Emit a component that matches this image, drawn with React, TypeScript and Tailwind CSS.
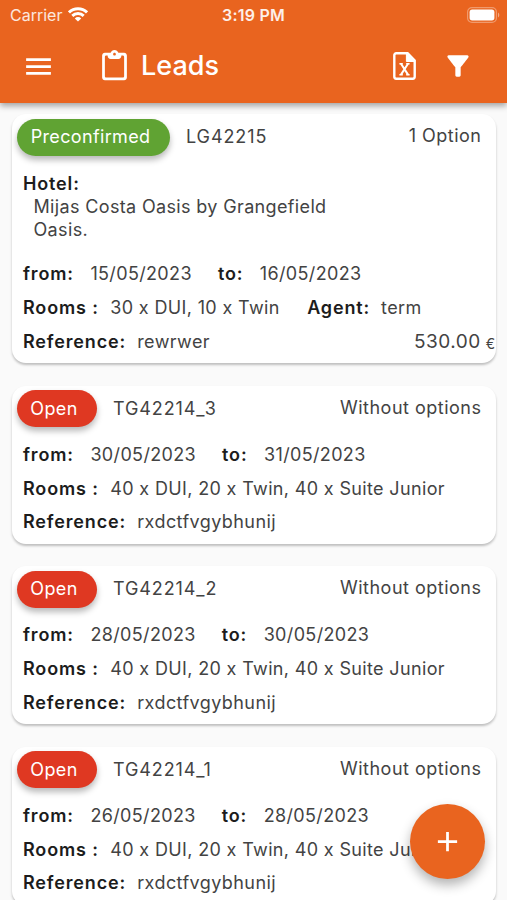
import { MdAdd, MdFilterAlt, MdMenu } from 'react-icons/md';

// --- Types ---
interface Lead {
  id: string;
  status: 'Preconfirmed' | 'Open';
  options: string;
  hotel?: string;
  from: string;
  to: string;
  rooms: string;
  agent?: string;
  reference: string;
  price?: string;
}

const leads: Lead[] = [
  {
    id: 'LG42215',
    status: 'Preconfirmed',
    options: '1 Option',
    hotel: 'Mijas Costa Oasis by Grangefield Oasis.',
    from: '15/05/2023',
    to: '16/05/2023',
    rooms: '30 x DUI, 10 x Twin',
    agent: 'term',
    reference: 'rewrwer',
    price: '530.00',
  },
  {
    id: 'TG42214_3',
    status: 'Open',
    options: 'Without options',
    from: '30/05/2023',
    to: '31/05/2023',
    rooms: '40 x DUI, 20 x Twin, 40 x Suite Junior',
    reference: 'rxdctfvgybhunij',
  },
  {
    id: 'TG42214_2',
    status: 'Open',
    options: 'Without options',
    from: '28/05/2023',
    to: '30/05/2023',
    rooms: '40 x DUI, 20 x Twin, 40 x Suite Junior',
    reference: 'rxdctfvgybhunij',
  },
  {
    id: 'TG42214_1',
    status: 'Open',
    options: 'Without options',
    from: '26/05/2023',
    to: '28/05/2023',
    rooms: '40 x DUI, 20 x Twin, 40 x Suite Junior',
    reference: 'rxdctfvgybhunij',
  },
];

// --- Icons ---
const WifiIcon = () => (
  <svg width="20" height="15" viewBox="0 0 20 15" fill="none" stroke="currentColor" strokeWidth="2.9">
    <path d="M1 5.4a12.8 12.8 0 0 1 18 0" />
    <path d="M4.3 8.9a8.1 8.1 0 0 1 11.4 0" />
    <path d="M10 14.6 6.8 11.4a4.6 4.6 0 0 1 6.4 0z" fill="currentColor" stroke="none" />
  </svg>
);

const BatteryIcon = () => (
  <svg width="33" height="16" viewBox="0 0 33 16">
    <rect x="0.6" y="0.6" width="28.8" height="14.8" rx="4.4" fill="none" stroke="#fff" strokeOpacity="0.35" strokeWidth="1.2" />
    <rect x="2.6" y="2.6" width="24.8" height="10.8" rx="2.6" fill="#fff" />
    <path d="M31 5.5c1.7.7 1.7 4.3 0 5z" fill="#fff" fillOpacity="0.45" />
  </svg>
);

const ClipboardIcon = () => (
  <svg width="33" height="33" viewBox="0 0 24 24" fill="currentColor">
    <path d="M19 2h-4.18C14.4.84 13.3 0 12 0S9.6.84 9.18 2H5c-1.1 0-2 .9-2 2v16c0 1.1.9 2 2 2h14c1.1 0 2-.9 2-2V4c0-1.1-.9-2-2-2zm-7 0c.55 0 1 .45 1 1s-.45 1-1 1-1-.45-1-1 .45-1 1-1zm6 18H6c-.55 0-1-.45-1-1V5c0-.55.45-1 1-1h1c0 1.6.9 2.6 2.2 2.6h5.6C16.100 6.600 17 5.600 17 4h1c.55 0 1 .45 1 1v14c0 .55-.45 1-1 1z" />
  </svg>
);

const ExcelIcon = () => (
  <svg width="23" height="28" viewBox="0 0 23 28" fill="none" stroke="currentColor">
    <path d="M3.2 1.3h11.4l7.1 7.2v16.3a1.9 1.9 0 0 1-1.9 1.9H3.2a1.9 1.9 0 0 1-1.9-1.9V3.2a1.9 1.9 0 0 1 1.9-1.9z" strokeWidth="2.4" />
    <path d="M13.4 1.5v8h8z" fill="currentColor" strokeWidth="1" />
    <path d="M8 11.8 15 22.6M15 11.8 8 22.6" strokeWidth="2" />
    <path d="M6.4 11.8h3.4M13.2 11.8h3.4M6.4 22.8h3.4M13.2 22.8h3.4" strokeWidth="1.4" />
  </svg>
);

// --- Components ---
const Label = ({ children }: { children: string }) => (
  <span className="shrink-0 font-semibold text-[#1c1c1c] tracking-[0.85px]">{children}</span>
);

const StatusBadge = ({ status }: { status: Lead['status'] }) => (
  <span
    className={`flex h-[37px] shrink-0 items-center justify-center rounded-full pr-[5px] text-white shadow-[0_4px_6px_rgba(0,0,0,0.28)] ${
      status === 'Open' ? 'w-20 bg-[#df3822]' : 'w-[153px] bg-[#60a333]'
    }`}
  >
    {status}
  </span>
);

const LeadCard = ({ lead }: { lead: Lead }) => (
  <article className="overflow-hidden whitespace-nowrap rounded-[14px] bg-white pb-[4.4px] shadow-[0_2px_2.5px_rgba(0,0,0,0.24)]">
    <div className="flex h-[52.2px] items-start pl-[5px] pr-[14px] pt-[4.6px]">
      <StatusBadge status={lead.status} />
      <span className="ml-[16.5px] mt-[5.5px] tracking-[0.9px]">{lead.id}</span>
      <span className="ml-auto mt-[4.5px] tracking-[0.5px]">{lead.options}</span>
    </div>

    {lead.hotel && (
      <div className="h-[91px] pl-[11.5px] pt-[5.8px] leading-[23px]">
        <Label>Hotel:</Label>
        <p className="ml-[10.5px] w-[320px] whitespace-normal">{lead.hotel}</p>
      </div>
    )}

    <div className="flex h-[33.8px] items-center pl-[11.5px]">
      <Label>from:</Label>
      <span className="ml-[16.500px]">{lead.from}</span>
      <span className="ml-[26px] flex">
        <Label>to:</Label>
      </span>
      <span className="ml-[16.500px]">{lead.to}</span>
    </div>
    <div className="flex h-[33.8px] items-center pl-[11.5px]">
      <Label>Rooms :</Label>
      <span className="ml-[11.5px]">{lead.rooms}</span>
      {lead.agent && (
        <span className="ml-[27.5px] flex gap-[11px]">
          <Label>Agent:</Label>
          {lead.agent}
        </span>
      )}
    </div>
    <div className="flex h-[33.8px] items-center pl-[11.5px]">
      <Label>Reference:</Label>
      <span className="ml-[11px] tracking-[0.42px]">{lead.reference}</span>
      {lead.price && (
        <span className="ml-auto flex items-baseline gap-[5px] pt-px text-[19px] tracking-[0.5px]">
          {lead.price} <span className="translate-y-px text-[14px]">€</span>
        </span>
      )}
    </div>
  </article>
);

export default function App() {
  return (
    <div className="relative flex h-[900px] w-[507px] flex-col overflow-hidden bg-[#fafafa] font-['Inter',sans-serif] text-[18px] leading-[26px] tracking-[0.35px] text-[#434343]">
      <header className="z-10 h-[103px] shrink-0 bg-[#e9641f] text-white shadow-[0_3px_6px_rgba(0,0,0,0.35)]">
        {/* Status bar */}
        <div className="grid h-[29px] grid-cols-3 items-center pl-[10px] pr-[7px] text-[16px] tracking-normal">
          <span className="flex items-center gap-[6px] text-white/85">
            Carrier
            <span className="text-white">
              <WifiIcon />
            </span>
          </span>
          <span className="pr-[3px] text-center font-semibold tracking-[0.2px] text-white/90">3:19 PM</span>
          <span className="flex justify-end">
            <BatteryIcon />
          </span>
        </div>

        {/* App bar */}
        <div className="flex h-[74px] items-center pl-[22px] pr-[33px]">
          <MdMenu size={33} />
          <span className="ml-[43px] flex">
            <ClipboardIcon />
          </span>
          <h1 className="ml-[10px] text-[27px] font-medium tracking-normal">Leads</h1>
          <span className="ml-auto flex items-center gap-[26px]">
            <ExcelIcon />
            <MdFilterAlt size={32} />
          </span>
        </div>
      </header>

      <main className="flex flex-col gap-[22.5px] px-[11.5px] pt-[11.3px]">
        {leads.map((lead) => (
          <LeadCard key={lead.id} lead={lead} />
        ))}
      </main>

      <button className="absolute bottom-[21.5px] right-[22px] z-20 flex size-[75px] items-center justify-center rounded-full bg-[#e9641f] text-white shadow-[0_6px_12px_rgba(0,0,0,0.3)]">
        <MdAdd size={33} />
      </button>
    </div>
  );
}
